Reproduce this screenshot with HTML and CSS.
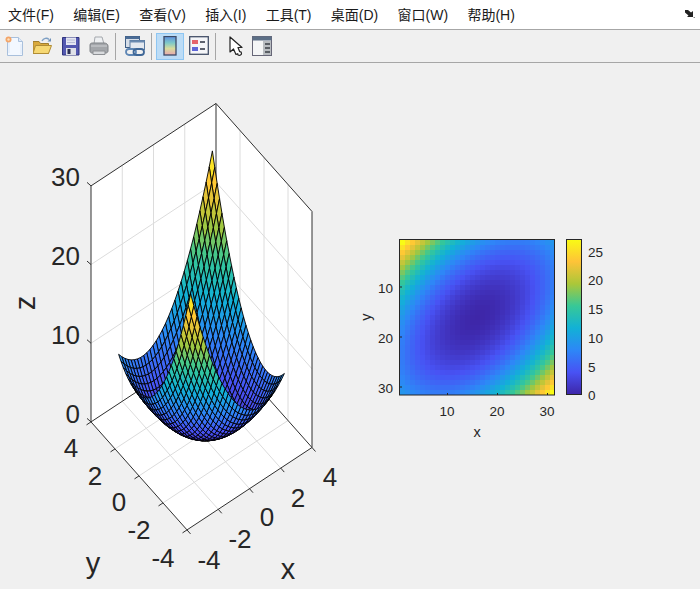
FILE: index.html
```html
<!DOCTYPE html>
<html lang="zh">
<head>
<meta charset="utf-8">
<title>Figure</title>
<link rel="stylesheet" href="styles.css">
</head>
<body>
<nav class="menubar">
  <span class="menu-item">文件(F)</span>
  <span class="menu-item">编辑(E)</span>
  <span class="menu-item">查看(V)</span>
  <span class="menu-item">插入(I)</span>
  <span class="menu-item">工具(T)</span>
  <span class="menu-item">桌面(D)</span>
  <span class="menu-item">窗口(W)</span>
  <span class="menu-item">帮助(H)</span>
  <svg class="dock" width="10" height="8" viewBox="0 0 10 8">
    <path d="M0 0h3l3 2.500L8 1v6H2l1.500-1.500L0 2.500z" fill="#222"/>
    <path d="M8.500 7.500h1.500" stroke="#888"/>
  </svg>
</nav>
<div class="toolbar">
  <span class="tool">
    <svg width="20" height="20" viewBox="0 0 20 20">
      <path d="M2.500 1.500h11l4 4v14h-15z" fill="#f3f8ff" stroke="#a9c0dc"/>
      <path d="M13.500 1.500v4h4" fill="#dfeafa" stroke="#a9c0dc"/>
      <path d="M4 6.500v10.500M16 8v10" stroke="#dbe7f7"/>
      <circle cx="3.500" cy="3.500" r="3" fill="#f3a467"/>
      <circle cx="3.500" cy="3.500" r="1.200" fill="#fde0bb"/>
    </svg>
  </span>
  <span class="tool">
    <svg width="20" height="20" viewBox="0 0 20 20">
      <path d="M0 5.500h6l1.500 2h8v10H0z" fill="#d9a93c" stroke="#a07f30"/>
      <path d="M0 17.500 2.500 9.500h16l-3 8z" fill="#f6d873" stroke="#b08c35"/>
      <path d="M9 5c1.500-3 5-3.500 7-1.500" fill="none" stroke="#7d9fc4" stroke-width="1.400"/>
      <path d="M14.500 5.500H18V2z" fill="#6c8fb8"/>
    </svg>
  </span>
  <span class="tool">
    <svg width="20" height="20" viewBox="0 0 20 20">
      <path d="M1.500 1.500H18v17.500H1.500z" fill="#5358b0" stroke="#30357f"/>
      <rect x="5" y="1.500" width="10" height="7.500" fill="#e4e6f2"/>
      <path d="M6 4h8M6 6.500h8" stroke="#b8bdd6"/>
      <rect x="5" y="12" width="10" height="7" fill="#dfe1e8"/>
      <rect x="6.500" y="13" width="3" height="5" fill="#2b2f55"/>
    </svg>
  </span>
  <span class="tool">
    <svg width="20" height="20" viewBox="0 0 20 20">
      <path d="M5 8 6 1h7l2 7z" fill="#eef0f2" stroke="#a4a8ad"/>
      <path d="M1 9c0-2 2-2 3-2h11c2 0 4 1 4 3v5c0 1-1 2-2 2H3c-1 0-2-1-2-2z" fill="#a3a6aa" stroke="#7f8286"/>
      <path d="M4 15h12v3.500H4z" fill="#d8dadd" stroke="#8d9094"/>
      <path d="M2 10h16" stroke="#cfd1d4"/>
    </svg>
  </span>
  <span class="sep"></span>
  <span class="tool tool-wide">
    <svg width="20" height="20" viewBox="0 0 20 20">
      <rect x="0.500" y="0.500" width="14" height="11" fill="#d6dee8" stroke="#3f5f86"/>
      <rect x="0.500" y="0.500" width="14" height="2.500" fill="#4a6c96"/>
      <rect x="5" y="4.500" width="14.500" height="9" fill="#e4e9f0" stroke="#5a7aa0"/>
      <rect x="5" y="4.500" width="14.500" height="2" fill="#6a8ab0"/>
      <rect x="1" y="13" width="10" height="6" rx="3" fill="none" stroke="#5f87b5" stroke-width="1.800"/>
      <rect x="8.500" y="13" width="10.500" height="6" rx="3" fill="none" stroke="#3f6797" stroke-width="1.800"/>
    </svg>
  </span>
  <span class="sep"></span>
  <span class="tool tool-on">
    <svg width="14" height="20" viewBox="0 0 14 20">
      <defs>
        <linearGradient id="barIcon" x1="0" y1="0" x2="0" y2="1">
          <stop offset="0" stop-color="#5f8fe0"/>
          <stop offset="0.350" stop-color="#7ec9c8"/>
          <stop offset="0.650" stop-color="#d8dc9c"/>
          <stop offset="1" stop-color="#e8a8b0"/>
        </linearGradient>
      </defs>
      <rect x="1" y="0.500" width="12" height="18.500" fill="url(#barIcon)" stroke="#3c4a66" stroke-width="1.300"/>
    </svg>
  </span>
  <span class="tool tool-wide">
    <svg width="20" height="20" viewBox="0 0 20 20">
      <rect x="0.700" y="0.700" width="18.600" height="17.600" fill="#f4f5f8" stroke="#445068" stroke-width="1.300"/>
      <rect x="3" y="4" width="6" height="4" fill="#e4636b"/>
      <rect x="3" y="11" width="6" height="4" fill="#5e66d8"/>
      <path d="M11 6h5M11 13h5" stroke="#2a3040" stroke-width="1.300"/>
    </svg>
  </span>
  <span class="sep"></span>
  <span class="tool tool-gap">
    <svg width="14" height="20" viewBox="0 0 14 20">
      <path d="M1 1v15l3.500-3 2.500 5.500 1.800-.8.200 1.300c2 .8 3.500-.2 3.500-1.800 0-1-.8-1.500-1.800-1.500L9 11.500h4z" fill="#fff" stroke="#222" stroke-width="1.200" stroke-linejoin="round"/>
    </svg>
  </span>
  <span class="tool tool-narrow">
    <svg width="20" height="20" viewBox="0 0 20 20">
      <rect x="0.500" y="0.500" width="19" height="19" fill="#f4f5f6" stroke="#667"/>
      <rect x="0.500" y="0.500" width="19" height="4" fill="#5c6f86"/>
      <rect x="11" y="5" width="8" height="14" fill="#b8bcc0"/>
      <path d="M13 8h5M13 12h5M13 16h5" stroke="#3a3f46" stroke-width="1.300"/>
    </svg>
  </span>
</div>
<main class="figure">
  <svg class="canvas" width="700" height="526" viewBox="0 63 700 526">
    <defs>
      <linearGradient id="parula" x1="0" y1="1" x2="0" y2="0">
        <stop offset="0" stop-color="#3e26a8"/>
        <stop offset="0.143" stop-color="#4852f4"/>
        <stop offset="0.286" stop-color="#2d87f7"/>
        <stop offset="0.429" stop-color="#12b1d6"/>
        <stop offset="0.571" stop-color="#37c897"/>
        <stop offset="0.714" stop-color="#abc739"/>
        <stop offset="0.857" stop-color="#fec338"/>
        <stop offset="1" stop-color="#f9fb15"/>
      </linearGradient>
    </defs>

    <g id="axes3d"></g>
    <g id="surface" class="mesh"></g>

    <g class="big end">
      <text x="80" y="186">30</text>
      <text x="80" y="265">20</text>
      <text x="80" y="344">10</text>
      <text x="80" y="423">0</text>
    </g>
    <g class="big mid">
      <text x="71" y="457">4</text>
      <text x="95" y="485">2</text>
      <text x="119" y="511">0</text>
      <text x="139" y="539">-2</text>
      <text x="163" y="567">-4</text>
      <text x="209" y="569">-4</text>
      <text x="240" y="548">-2</text>
      <text x="267" y="526">0</text>
      <text x="298" y="507">2</text>
      <text x="330" y="486">4</text>
    </g>
    <text class="big-label" x="93" y="573">y</text>
    <text class="big-label" x="288" y="579">x</text>
    <text class="big-label" x="35" y="303" transform="rotate(-90 35 303)">z</text>

    <g id="image" class="cells"></g>
    <rect class="frame" x="399.500" y="239.500" width="155" height="155.500"/>
    <path class="tick" d="M447.500 395v-2M497.500 395v-2M547.500 395v-2M400 287h2M400 337h2M400 387h2"/>
    <g class="small mid">
      <text x="447" y="416">10</text>
      <text x="497" y="416">20</text>
      <text x="547" y="416">30</text>
    </g>
    <g class="small end">
      <text x="393" y="293">10</text>
      <text x="393" y="343">20</text>
      <text x="393" y="393">30</text>
    </g>
    <text class="small-label" x="477" y="437">x</text>
    <text class="small-label" x="371" y="317" transform="rotate(-90 371 317)">y</text>

    <rect class="bar" x="566.500" y="239.500" width="15" height="155"/>
    <g class="small start">
      <text x="588" y="257">25</text>
      <text x="588" y="285">20</text>
      <text x="588" y="314">15</text>
      <text x="588" y="343">10</text>
      <text x="588" y="372">5</text>
      <text x="588" y="400">0</text>
    </g>
  </svg>
</main>
<script src="plot.js"></script>
</body>
</html>
```
FILE: styles.css
```css
html, body {
  margin: 0;
  padding: 0;
  height: 100%;
  overflow: hidden;
  background: #f0f0f0;
}

.menubar {
  display: flex;
  align-items: center;
  gap: 19.3px;
  box-sizing: border-box;
  height: 30px;
  padding: 0 0 1px 8px;
  background: #fff;
  border-bottom: 1px solid #a6a6a6;
  font: 14px "Liberation Sans", "Noto Sans CJK SC", sans-serif;
  color: #1a1a1a;
}

.dock {
  margin-left: auto;
  margin-right: 5px;
}

.toolbar {
  display: flex;
  align-items: center;
  box-sizing: border-box;
  height: 33px;
  padding-left: 1px;
  background: #f0f0f0;
  border-bottom: 1px solid #a6a6a6;
}

.tool {
  display: flex;
  align-items: center;
  justify-content: center;
  box-sizing: border-box;
  width: 28px;
  height: 27px;
}

.tool-on {
  background: #bcdcf6;
  border: 1px solid #8ec6f2;
}

.tool-wide {
  width: 29px;
}

.tool-gap {
  margin-left: 2px;
}

.tool-narrow {
  width: 24px;
}

.sep {
  width: 1px;
  height: 27px;
  margin: 0 4px 0 2px;
  background: #a6a6a6;
}

.figure {
  display: block;
}

.canvas {
  display: block;
  font-family: "Liberation Sans", Arial, sans-serif;
  fill: #262626;
}

.big { font-size: 26px; }
.small { font-size: 13.5px; }
.big-label { font-size: 29px; text-anchor: middle; }
.small-label { font-size: 14.5px; text-anchor: middle; }
.end { text-anchor: end; }
.mid { text-anchor: middle; }
.start { text-anchor: start; }

.mesh {
  stroke: #000;
  stroke-width: 0.9;
  stroke-linejoin: round;
}

.cells { shape-rendering: crispEdges; }

.wall { fill: #fff; stroke: none; }
.grid { fill: none; stroke: #dcdcdc; stroke-width: 1; }
.box { fill: none; stroke: #303030; stroke-width: 1; }

.frame { fill: none; stroke: #262626; stroke-width: 1; }
.tick { fill: none; stroke: #262626; stroke-width: 1; }
.bar { fill: url(#parula); stroke: #262626; stroke-width: 1; }
```
FILE: plot.js
```js
(function () {
  var NS = "http://www.w3.org/2000/svg";
  var MAP = [
    [0.2422, 0.1504, 0.6603],
    [0.2810, 0.3228, 0.9579],
    [0.1786, 0.5289, 0.9682],
    [0.0689, 0.6948, 0.8394],
    [0.2161, 0.7843, 0.5923],
    [0.6720, 0.7793, 0.2227],
    [0.9970, 0.7659, 0.2199],
    [0.9769, 0.9839, 0.0805]
  ];

  function colour(v) {
    var t = Math.max(0, Math.min(1, v / 27)) * (MAP.length - 1);
    var i = Math.min(MAP.length - 2, Math.floor(t));
    var f = t - i;
    var rgb = [0, 1, 2].map(function (k) {
      return Math.round(255 * (MAP[i][k] + (MAP[i + 1][k] - MAP[i][k]) * f));
    });
    return "rgb(" + rgb.join(",") + ")";
  }

  function height(x, y) {
    return x * x + y * y + x * y;
  }

  /* orthographic projection read from the axes corners */
  function project(x, y, z) {
    return [
      201.5 + 15.625 * x - 12 * y,
      434.7 - 10.3 * x - 13.5 * y - 7.867 * z
    ];
  }

  function pts(list) {
    return list.map(function (p) {
      return p[0].toFixed(2) + "," + p[1].toFixed(2);
    }).join(" ");
  }

  function add(parent, tag, attrs) {
    var el = document.createElementNS(NS, tag);
    Object.keys(attrs).forEach(function (k) { el.setAttribute(k, attrs[k]); });
    parent.appendChild(el);
    return el;
  }

  function line(parent, cls, a, b) {
    add(parent, "line", { "class": cls, x1: a[0], y1: a[1], x2: b[0], y2: b[1] });
  }

  /* 3-D axes */
  var axes = document.getElementById("axes3d");
  add(axes, "polygon", {
    "class": "wall",
    points: pts([
      project(-4, 4, 30), project(4, 4, 30), project(4, -4, 30),
      project(4, -4, 0), project(-4, -4, 0), project(-4, 4, 0)
    ])
  });

  [-2, 0, 2].forEach(function (v) {
    line(axes, "grid", project(v, -4, 0), project(v, 4, 0));
    line(axes, "grid", project(-4, v, 0), project(4, v, 0));
    line(axes, "grid", project(v, 4, 0), project(v, 4, 30));
    line(axes, "grid", project(4, v, 0), project(4, v, 30));
  });
  [10, 20].forEach(function (z) {
    line(axes, "grid", project(-4, 4, z), project(4, 4, z));
    line(axes, "grid", project(4, 4, z), project(4, -4, z));
  });

  [
    [[-4, 4, 0], [-4, 4, 30]],
    [[-4, 4, 30], [4, 4, 30]],
    [[4, 4, 30], [4, -4, 30]],
    [[4, 4, 0], [4, 4, 30]],
    [[4, -4, 0], [4, -4, 30]],
    [[-4, 4, 0], [4, 4, 0]],
    [[4, 4, 0], [4, -4, 0]],
    [[-4, 4, 0], [-4, -4, 0]],
    [[-4, -4, 0], [4, -4, 0]]
  ].forEach(function (s) {
    line(axes, "box", project.apply(null, s[0]), project.apply(null, s[1]));
  });

  [0, 10, 20, 30].forEach(function (z) {
    var p = project(-4, 4, z);
    line(axes, "box", p, [p[0] - 4, p[1] - 3.5]);
  });
  [-4, -2, 0, 2, 4].forEach(function (v) {
    var a = project(-4, v, 0);
    line(axes, "box", a, [a[0] - 4.5, a[1] + 3]);
    var b = project(v, -4, 0);
    line(axes, "box", b, [b[0] + 3.5, b[1] + 4]);
  });

  /* surface: far cells first, since the eye looks along +x, +y */
  var surface = document.getElementById("surface");
  var N = 31;
  var i, j;
  for (i = N - 2; i >= 0; i--) {
    for (j = N - 2; j >= 0; j--) {
      var x0 = -3 + 0.2 * i, x1 = x0 + 0.2;
      var y0 = -3 + 0.2 * j, y1 = y0 + 0.2;
      var z00 = height(x0, y0), z10 = height(x1, y0);
      var z11 = height(x1, y1), z01 = height(x0, y1);
      add(surface, "polygon", {
        points: pts([
          project(x0, y0, z00), project(x1, y0, z10),
          project(x1, y1, z11), project(x0, y1, z01)
        ]),
        fill: colour((z00 + z10 + z11 + z01) / 4)
      });
    }
  }

  /* image of the same data */
  var image = document.getElementById("image");
  for (j = 0; j < N; j++) {
    for (i = 0; i < N; i++) {
      add(image, "rect", {
        x: 400 + i * 5, y: 240 + j * 5,
        width: 5, height: 5,
        fill: colour(height(-3 + 0.2 * i, -3 + 0.2 * j))
      });
    }
  }
})();
```
